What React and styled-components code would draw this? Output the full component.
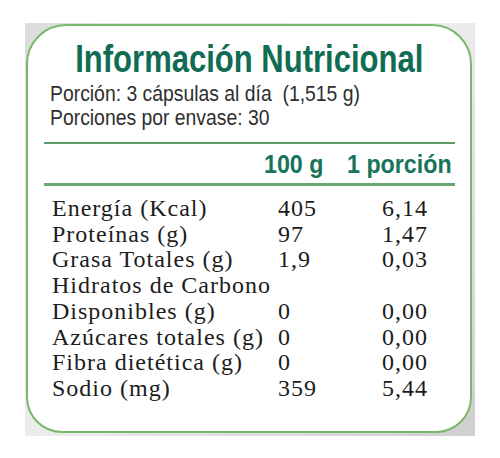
import React from "react";
import styled, { createGlobalStyle } from "styled-components";

const Global = createGlobalStyle`
  html, body { margin: 0; padding: 0; background: #ffffff; }
  body { font-family: "Liberation Sans", Arial, sans-serif; }
`;

const Page = styled.div`
  padding: 23px 0 0 25px;
`;

const Frame = styled.div`
  width: 450px;
  height: 413px;
  box-sizing: border-box;
  padding: 1px 3px 3px 1px;
  background: linear-gradient(135deg, #dcdcdc 0%, #ececec 50%, #cfcfcf 100%);
`;

const Card = styled.div`
  box-sizing: border-box;
  width: 446px;
  height: 409px;
  background: #ffffff;
  border: 2px solid #79b96b;
  border-radius: 40px 40px 36px 36px;
  padding: 14px 15px 0 16px;
  display: flex;
  flex-direction: column;
  overflow: hidden;
  & > * { flex-shrink: 0; }
`;

const Narrow = styled.span`
  display: inline-block;
  white-space: pre;
  transform: scaleX(${(p) => p.$scale});
  transform-origin: ${(p) => p.$origin || "left"} center;
`;

const Title = styled.h1`
  margin: 0;
  display: flex;
  justify-content: center;
  font-family: "Liberation Sans", Arial, sans-serif;
  font-weight: 700;
  font-size: 38px;
  line-height: 38px;
  color: #106c52;
`;

const Sub = styled.div`
  margin-top: 4px;
  padding-left: 6px;
  display: flex;
  flex-direction: column;
  align-items: flex-start;
  font-family: "Liberation Sans", Arial, sans-serif;
  font-size: 22px;
  line-height: 24px;
  color: #2e2e2e;
`;

const HeadBand = styled.div`
  margin-top: 12px;
  border-top: 2px solid #5d9c68;
  padding: 6px 0 5px;
  display: grid;
  grid-template-columns: 220px 83px 1fr;
  font-family: "Liberation Sans", Arial, sans-serif;
  font-weight: 700;
  font-size: 25px;
  line-height: 28px;
  color: #17745a;
`;

const Table = styled.div`
  border-top: 3px solid #6aa872;
  padding-top: 10px;
  padding-left: 8px;
  display: grid;
  grid-template-columns: 226px 104px 1fr;
  font-family: "Liberation Serif", "Times New Roman", serif;
  font-size: 24px;
  line-height: 25.7px;
  letter-spacing: 1px;
  color: #1c1c1c;
`;

const Cell = styled.div`
  white-space: nowrap;
  grid-column: ${(p) => (p.$span ? "1 / span 3" : "auto")};
`;

const rows = [
  ["Energía (Kcal)", "405", "6,14"],
  ["Proteínas (g)", "97", "1,47"],
  ["Grasa Totales (g)", "1,9", "0,03"],
  ["Hidratos de Carbono"],
  ["Disponibles (g)", "0", "0,00"],
  ["Azúcares totales (g)", "0", "0,00"],
  ["Fibra dietética (g)", "0", "0,00"],
  ["Sodio (mg)", "359", "5,44"],
];

export default function App() {
  return (
    <>
      <Global />
      <Page>
        <Frame>
          <Card>
            <Title>
              <Narrow $scale={0.816} $origin="center">
                Información Nutricional
              </Narrow>
            </Title>
            <Sub>
              <Narrow $scale={0.88}>{"Porción: 3 cápsulas al día  (1,515 g)"}</Narrow>
              <Narrow $scale={0.88}>{"Porciones por envase: 30"}</Narrow>
            </Sub>
            <HeadBand>
              <span />
              <Narrow $scale={0.93}>100 g</Narrow>
              <Narrow $scale={0.93}>1 porción</Narrow>
            </HeadBand>
            <Table>
              {rows.map((r) =>
                r.length === 1 ? (
                  <Cell key={r[0]} $span>
                    {r[0]}
                  </Cell>
                ) : (
                  <React.Fragment key={r[0]}>
                    <Cell>{r[0]}</Cell>
                    <Cell>{r[1]}</Cell>
                    <Cell>{r[2]}</Cell>
                  </React.Fragment>
                )
              )}
            </Table>
          </Card>
        </Frame>
      </Page>
    </>
  );
}
